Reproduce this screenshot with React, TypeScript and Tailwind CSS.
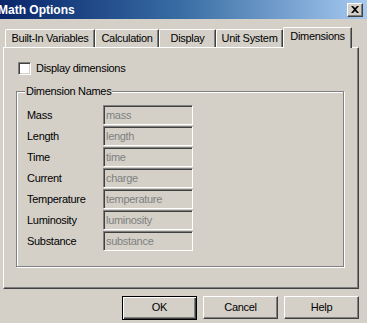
import React from "react";

const rows: [string, string][] = [
  ["Mass", "mass"],
  ["Length", "length"],
  ["Time", "time"],
  ["Current", "charge"],
  ["Temperature", "temperature"],
  ["Luminosity", "luminosity"],
  ["Substance", "substance"],
];

function Tab({ label, width }: { label: string; width: string }) {
  return (
    <div
      className={`${width} h-[18px] flex items-center justify-center border-t border-l border-r border-t-white border-l-white border-r-[#404040] shadow-[inset_-1px_0_0_#808080] rounded-tl-[2px] rounded-tr-[1px]`}
    >
      {label}
    </div>
  );
}

function Button({ label, def }: { label: string; def?: boolean }) {
  if (def) {
    return (
      <div className="w-[75px] h-[24px] border border-black flex items-center justify-center shadow-[inset_1px_1px_0_#fff,inset_-1px_-1px_0_#404040,inset_-2px_-2px_0_#808080]">
        <span className="mt-[-1px]">{label}</span>
      </div>
    );
  }
  return (
    <div className="w-[75px] h-[23px] border border-t-white border-l-white border-r-[#404040] border-b-[#404040] flex items-center justify-center shadow-[inset_-1px_-1px_0_#808080]">
      <span className="mt-[-1px]">{label}</span>
    </div>
  );
}

export default function App() {
  return (
    <div className="w-[367px] h-[323px] overflow-hidden bg-[#d4d0c8] text-[11px] tracking-[-0.3px] text-black font-['Liberation_Sans',Arial,sans-serif] leading-none">
      {/* Title bar */}
      <div className="h-[19px] flex items-center bg-gradient-to-r from-[#0a246a] via-[#3a6ea5] to-[#a6caf0]">
        <span className="ml-[-2px] text-white font-bold text-[12px] tracking-normal">Math Options</span>
        <div className="ml-auto mr-[4px] w-[16px] h-[14px] bg-[#d4d0c8] border border-t-white border-l-white border-r-[#404040] border-b-[#404040] shadow-[inset_-1px_-1px_0_#808080] flex items-center justify-center">
          <svg width="8" height="7" viewBox="0 0 8 7" className="mt-[-1px]">
            <path d="M0 0h2l2 2 2-2h2L5 3.5 8 7H6L4 5 2 7H0l3-3.5z" fill="#000" />
          </svg>
        </div>
      </div>

      {/* Tabs */}
      <div className="mt-[8px] pl-[5px] h-[20px] flex items-end">
        <Tab label="Built-In Variables" width="w-[90px]" />
        <Tab label="Calculation" width="w-[64px]" />
        <Tab label="Display" width="w-[57px]" />
        <Tab label="Unit System" width="w-[67px]" />
        <div className="relative z-10 w-[69px] h-[21px] mb-[-1px] bg-[#d4d0c8] flex items-center justify-center pb-[3px] border-t border-l border-r border-t-white border-l-white border-r-[#404040] shadow-[inset_-1px_0_0_#808080] rounded-tl-[2px] rounded-tr-[1px]">
          Dimensions
        </div>
      </div>

      {/* Panel */}
      <div className="ml-[3px] w-[356px] h-[242px] border border-t-white border-l-white border-r-[#404040] border-b-[#404040] shadow-[inset_-1px_-1px_0_#808080] flex flex-col">
        <div className="mt-[14px] ml-[14px] flex items-center">
          <div className="w-[13px] h-[13px] bg-white border border-t-[#808080] border-l-[#808080] border-r-white border-b-white shadow-[inset_1px_1px_0_#404040,inset_-1px_-1px_0_#d4d0c8]" />
          <span className="ml-[5px]">Display dimensions</span>
        </div>

        <div className="relative mt-[16px] ml-[12px] w-[328px] h-[176px] border border-[#808080] shadow-[inset_1px_1px_0_#fff,1px_1px_0_#fff]">
          <span className="absolute left-[8px] top-[-6px] px-[1px] bg-[#d4d0c8]">Dimension Names</span>
          <div className="pt-[13px] pl-[10px] flex flex-col gap-[1px]">
            {rows.map(([label, value]) => (
              <div key={label} className="flex items-center h-[20px]">
                <span className="w-[76px]">{label}</span>
                <div className="w-[90px] h-[20px] border border-t-[#808080] border-l-[#808080] border-r-white border-b-white shadow-[inset_1px_1px_0_#404040,inset_-1px_-1px_0_#d4d0c8] flex items-center pl-[2px] text-[#808080]">
                  {value}
                </div>
              </div>
            ))}
          </div>
        </div>
      </div>

      {/* Buttons */}
      <div className="mt-[7px] flex gap-[6px] pl-[122px]">
        <Button label="OK" def />
        <Button label="Cancel" />
        <Button label="Help" />
      </div>
    </div>
  );
}
